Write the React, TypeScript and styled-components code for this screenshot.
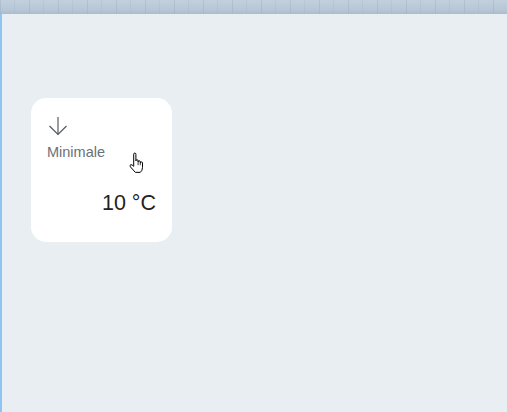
import React from "react";
import styled, { createGlobalStyle } from "styled-components";

const Global = createGlobalStyle`
  html, body { margin: 0; padding: 0; height: 100%; }
  body { font-family: "Liberation Sans", Arial, sans-serif; background: #e8eef1; }
  #root { height: 100%; }
`;

const Page = styled.div`
  display: flex;
  flex-direction: column;
  width: 507px;
  height: 412px;
  overflow: hidden;
`;

const TopBar = styled.div`
  height: 14px;
  flex: none;
  background:
    repeating-linear-gradient(90deg, rgba(150,168,188,0.35) 0 1px, transparent 1px 14px, rgba(150,168,188,0.18) 14px 15px, transparent 15px 29px),
    linear-gradient(180deg, #c2d0de 0%, #b7c7d7 70%, #abbccd 100%);
`;

const Main = styled.div`
  flex: 1;
  border-left: 2px solid #8fc3f1;
  background: #e8eef1;
  padding: 84px 0 0 29px;
`;

const Card = styled.div`
  position: relative;
  box-sizing: border-box;
  width: 141px;
  height: 144px;
  border-radius: 15px;
  background: #ffffff;
  padding: 18px 16px 0 16px;
  display: flex;
  flex-direction: column;
`;

const Icon = styled.svg`
  display: block;
  margin-left: 1px;
`;

const Label = styled.div`
  margin-top: 8px;
  font-size: 14.5px;
  line-height: 16px;
  color: #6b7078;
`;

const Value = styled.div`
  margin-top: 31px;
  text-align: right;
  font-size: 21.5px;
  line-height: 24px;
  color: #1f2124;
`;

const Cursor = styled.svg`
  position: absolute;
  left: 97px;
  top: 54px;
`;

export default function App() {
  return (
    <Page>
      <Global />
      <TopBar />
      <Main>
        <Card>
          <Icon width="20" height="20" viewBox="0 0 20 20" fill="none" stroke="#555a60" strokeWidth="1.2">
            <path d="M10 1 V18.5" />
            <path d="M1.5 10 L10 18.5 L18.5 10" />
          </Icon>
          <Label>Minimale</Label>
          <Value>10 °C</Value>
          <Cursor width="18" height="22" viewBox="0 0 16 20">
            <path
              d="M5 2 Q5 1 6 1 Q7 1 7 2 V8 Q7 7 8 7 Q9 7 9 8 V9 Q9 8 10 8 Q11 8 11 9 V10 Q11 9 12 9 Q13 9 13 10 V14 Q13 17 11 18.5 H6.5 L2 13.5 Q1 12 2.5 11.5 Q3.5 11.5 5 13 Z"
              fill="#ffffff"
              stroke="#000000"
              strokeWidth="0.9"
              strokeLinejoin="round"
            />
            <path d="M9 9 V12 M11 10 V12" stroke="#000" strokeWidth="0.7" />
          </Cursor>
        </Card>
      </Main>
    </Page>
  );
}
